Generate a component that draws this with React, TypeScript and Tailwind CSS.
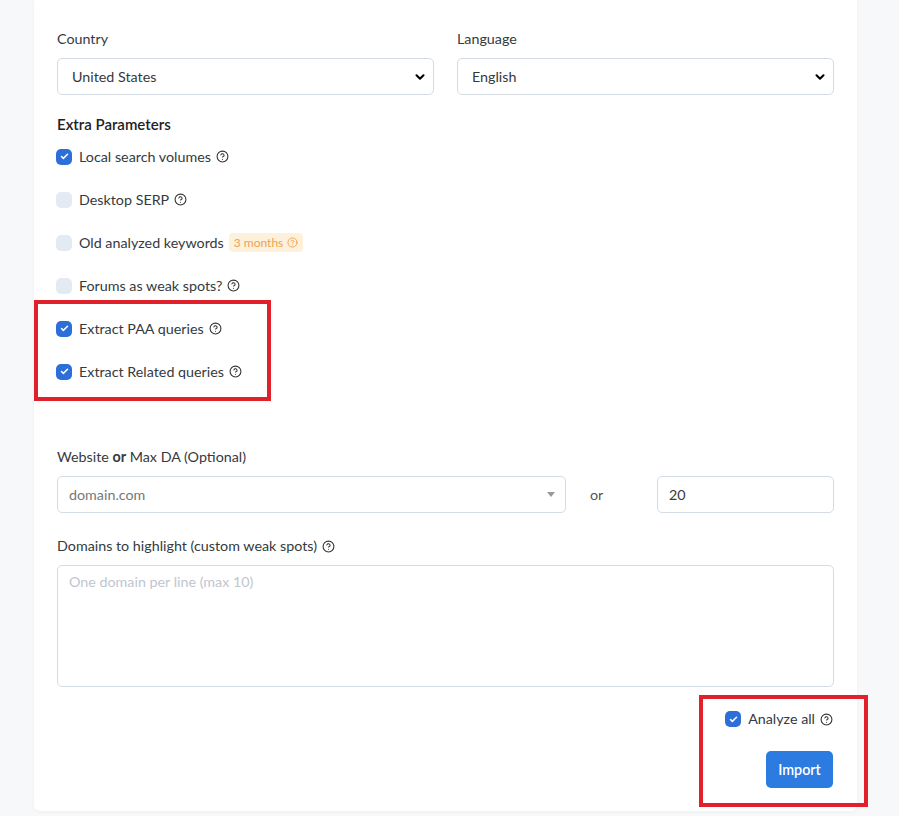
import { ChevronDown, CircleHelp, Check } from "lucide-react"

function Help() {
  return <CircleHelp className="ml-[5px] h-[13px] w-[13px] text-[#333]" strokeWidth={2} />
}

function Box({ checked }: { checked: boolean }) {
  return checked ? (
    <span className="flex h-[16px] w-[16px] shrink-0 items-center justify-center rounded-[5px] bg-[#2c6fd9]">
      <Check className="h-[9px] w-[9px] text-white" strokeWidth={4} />
    </span>
  ) : (
    <span className="h-[16px] w-[16px] shrink-0 rounded-[5px] bg-[#e3eaf4]" />
  )
}

function Row({ label, checked, badge }: { label: string; checked: boolean; badge?: boolean }) {
  return (
    <div className="flex h-[43px] items-center">
      <Box checked={checked} />
      <span className="ml-[7px] text-[#343a40]">{label}</span>
      {badge ? (
        <span className="ml-[5px] flex h-[19px] items-center rounded-[4px] bg-[#fdf1dc] px-[5px] text-[12px] text-[#f0a050]">
          3 months
          <CircleHelp className="ml-[4px] h-[11px] w-[11px]" strokeWidth={2} />
        </span>
      ) : (
        <Help />
      )}
    </div>
  )
}

function Select({ value }: { value: string }) {
  return (
    <div className="flex h-[37px] items-center justify-between rounded-[5px] border border-[#d5dbe2] bg-white pl-[14px] pr-[6px]">
      <span className="text-[#343a40]">{value}</span>
      <ChevronDown className="h-[14px] w-[14px] text-black" strokeWidth={3.5} />
    </div>
  )
}

export default function App() {
  return (
    <div
      className="min-h-screen bg-[#f7f8fa] pl-[34px] text-[14.3px] leading-[20px]"
      style={{ fontFamily: "Lato, 'Open Sans', sans-serif" }}
    >
      <div className="flex w-[823px] flex-col rounded-b-[6px] bg-white pb-[4px] pl-[22px] pr-[23px] pt-[29px] shadow-[0_1px_4px_rgba(0,0,0,0.04)]">
        <div className="grid grid-cols-2 gap-[23px] pl-[1px]">
          <div>
            <label className="block text-[#343a40]">Country</label>
            <div className="mt-[9px]">
              <Select value="United States" />
            </div>
          </div>
          <div>
            <label className="block text-[#343a40]">Language</label>
            <div className="mt-[9px]">
              <Select value="English" />
            </div>
          </div>
        </div>

        <h3 className="mt-[19px] pl-[1px] text-[15px] font-semibold text-[#222]">Extra Parameters</h3>

        <div className="mt-[1px] flex flex-col">
          <Row label="Local search volumes" checked />
          <Row label="Desktop SERP" checked={false} />
          <Row label="Old analyzed keywords" checked={false} badge />
          <Row label="Forums as weak spots?" checked={false} />
          <div className="-mb-[8px] -ml-[22px] -mt-[7px] w-[237px] border-4 border-[#e0202a] pb-[4px] pl-[18px] pt-[3px]">
            <Row label="Extract PAA queries" checked />
            <Row label="Extract Related queries" checked />
          </div>
        </div>

        <label className="mt-[54px] block pl-[1px] text-[#343a40]">
          Website <b className="font-bold">or</b> Max DA (Optional)
        </label>
        <div className="ml-[1px] mt-[9px] flex items-center">
          <div className="flex h-[37px] flex-1 items-center justify-between rounded-[5px] border border-[#d5dbe2] pl-[11px] pr-[10px]">
            <span className="text-[#777]">domain.com</span>
            <span className="h-0 w-0 border-x-[4px] border-t-[5px] border-x-transparent border-t-[#999]" />
          </div>
          <span className="ml-[24px] w-[67px] text-[#555]">or</span>
          <div className="flex h-[37px] w-[177px] items-center rounded-[5px] border border-[#d5dbe2] pl-[11px] text-[#343a40]">
            20
          </div>
        </div>

        <label className="mt-[23px] flex items-center pl-[1px] text-[#343a40]">
          Domains to highlight (custom weak spots)
          <Help />
        </label>
        <textarea
          className="ml-[1px] mt-[9px] h-[122px] resize-none rounded-[5px] border border-[#d5dbe2] px-[11px] py-[6px] outline-none placeholder:text-[#c0c6cf]"
          placeholder="One domain per line (max 10)"
        />

        <div className="-mr-[34px] mt-[8px] flex w-[169px] flex-col items-end self-end border-4 border-[#e0202a] pb-[15px] pr-[31px] pt-[10px]">
          <div className="flex h-[20px] items-center">
            <Box checked />
            <span className="ml-[7px] text-[#343a40]">Analyze all</span>
            <Help />
          </div>
          <button className="mt-[22px] h-[37px] w-[67px] rounded-[5px] bg-[#2c7be0] font-semibold text-white">
            Import
          </button>
        </div>
      </div>
    </div>
  )
}
